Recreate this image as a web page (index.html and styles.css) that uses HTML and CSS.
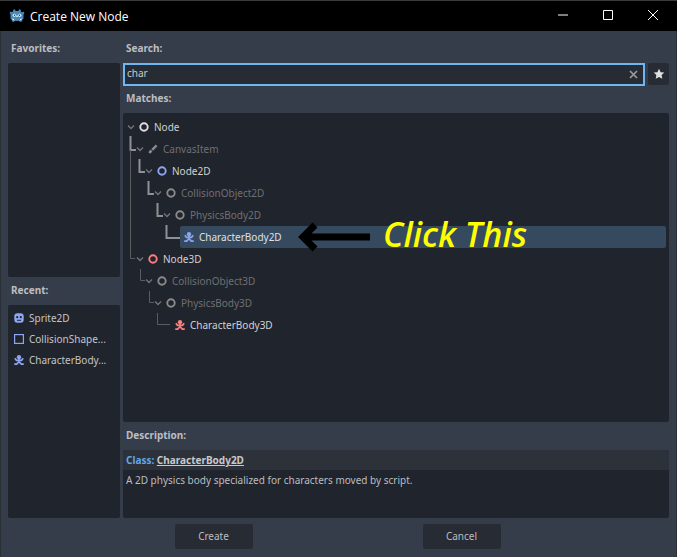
FILE: index.html
```html
<!DOCTYPE html>
<html lang="en">
<head>
<meta charset="utf-8">
<title>Create New Node</title>
<link rel="stylesheet" href="styles.css">
</head>
<body>
<svg class="defs" width="0" height="0" aria-hidden="true">
  <symbol id="chev" viewBox="0 0 8 8"><path d="M1 2.500 4 5.500 7 2.500" fill="none" stroke="currentColor" stroke-width="1.300"/></symbol>
  <symbol id="ring" viewBox="0 0 10 10"><circle cx="5" cy="5" r="3.700" fill="none" stroke="currentColor" stroke-width="1.900"/></symbol>
  <symbol id="body" viewBox="0 0 12 12"><circle cx="6" cy="2.700" r="2.600" fill="currentColor"/><path d="M1 3.800 3 6.400H9L11 3.800M6 4.500V8M.3 11H3.200L6 8l2.800 3h2.900" fill="none" stroke="currentColor" stroke-width="2"/></symbol>
</svg>
<div class="window">
  <header class="titlebar">
    <svg class="logo" viewBox="0 0 16 16"><path fill="#478cbf" d="M6 1.200 6.500 3h3L10 1.200l2 .7-.2 1.600 1.200.9 1.400-.8 1.100 1.500-1 1.200v4.500l-1 .4-.4 2-2.400.8-.3-1.500H5.600l-.3 1.500-2.400-.8-.4-2-1-.4V6.100l-1-1.200L1.600 3.400l1.400.8 1.200-.9L4 1.900z"/><circle cx="5.300" cy="7.200" r="1.500" fill="#fff"/><circle cx="10.700" cy="7.200" r="1.500" fill="#fff"/><circle cx="5.500" cy="7.300" r=".8" fill="#333"/><circle cx="10.500" cy="7.300" r=".8" fill="#333"/><path fill="#fff" d="M7.300 7.500h1.400v1.500H7.300zM3.500 10.600l1.500.4v1H8h3v-1l1.500-.4v1.200l-1.500.4H5l-1.500-.4z"/></svg>
    <span class="title-text">Create New Node</span>
    <div class="caption">
      <svg class="cap" viewBox="0 0 10 10"><path d="M0 5h10" stroke="#fff" stroke-width="1"/></svg>
      <svg class="cap" viewBox="0 0 10 10"><path d="M.5.500h9v9h-9z" fill="none" stroke="#fff"/></svg>
      <svg class="cap" viewBox="0 0 10 10"><path d="M0 0 10 10M10 0 0 10" stroke="#fff" stroke-width="1"/></svg>
    </div>
  </header>

  <main class="content">
    <aside class="side">
      <div class="label">Favorites:</div>
      <div class="panel favorites"></div>
      <div class="label recent-label">Recent:</div>
      <div class="panel recent">
        <div class="recent-row">
          <svg class="ico10 blue" viewBox="0 0 10 10"><rect x=".3" y=".3" width="9.400" height="9.400" rx="3" fill="currentColor"/><circle cx="3.200" cy="4.200" r="1.100" fill="#20242c"/><circle cx="6.800" cy="4.200" r="1.100" fill="#20242c"/><path d="M3 7.300h4" stroke="#20242c" stroke-width="1"/></svg>
          <span>Sprite2D</span>
        </div>
        <div class="recent-row">
          <svg class="ico10 blue" viewBox="0 0 10 10"><rect x=".6" y=".6" width="8.800" height="8.800" fill="none" stroke="currentColor" stroke-width="1.200"/></svg>
          <span>CollisionShape...</span>
        </div>
        <div class="recent-row">
          <svg class="ico10 blue"><use href="#body"/></svg>
          <span>CharacterBody...</span>
        </div>
      </div>
    </aside>

    <section class="main-col">
      <div class="label">Search:</div>
      <div class="search-row">
        <div class="search-input">
          <span class="search-text">char</span>
          <svg class="clear" viewBox="0 0 9 9"><path d="M1 1 8 8M8 1 1 8" stroke="#9a9b9e" stroke-width="1.700"/></svg>
        </div>
        <button class="star-btn" type="button">
          <svg viewBox="0 0 12 12" class="star"><path fill="#e0e0e0" d="M6 .8 7.600 4.200l3.700.4-2.700 2.500.7 3.700L6 9 2.700 10.800l.7-3.700L.7 4.600l3.700-.4z"/></svg>
        </button>
      </div>
      <div class="label matches-label">Matches:</div>
      <div class="panel tree">
        <svg class="guides" width="546" height="309" viewBox="0 0 546 309">
          <path class="strong" d="M7.500 23V37H13M16.500 46V59H22M25.500 68V81H31M34.500 90V103H40M43.500 112V125H57"/>
          <path class="weak" d="M7.500 37V145.500H12M17.500 156V167.500H22M26.500 178V189.500H31M34.500 200V211.500H47"/>
        </svg>
        <div class="row d0 bright"><svg class="chev"><use href="#chev"/></svg><svg class="ring white"><use href="#ring"/></svg><span>Node</span></div>
        <div class="row d1 dim"><svg class="chev"><use href="#chev"/></svg><svg class="ring" viewBox="0 0 10 10"><path d="M.8 9.200 2.800 9.200 4.400 7.400 2.600 5.600.8 7.400zM3.300 4.900 7.800.6 9.400 2.200 5.100 6.700z" fill="#8a8a8a"/></svg><span>CanvasItem</span></div>
        <div class="row d2 bright"><svg class="chev"><use href="#chev"/></svg><svg class="ring blue"><use href="#ring"/></svg><span>Node2D</span></div>
        <div class="row d3 dim"><svg class="chev"><use href="#chev"/></svg><svg class="ring grey"><use href="#ring"/></svg><span>CollisionObject2D</span></div>
        <div class="row d4 dim"><svg class="chev"><use href="#chev"/></svg><svg class="ring grey"><use href="#ring"/></svg><span>PhysicsBody2D</span></div>
        <div class="row d5 selected"><svg class="ring blue"><use href="#body"/></svg><span>CharacterBody2D</span></div>
        <div class="row d1 bright"><svg class="chev"><use href="#chev"/></svg><svg class="ring red"><use href="#ring"/></svg><span>Node3D</span></div>
        <div class="row d2 dim"><svg class="chev"><use href="#chev"/></svg><svg class="ring grey"><use href="#ring"/></svg><span>CollisionObject3D</span></div>
        <div class="row d3 dim"><svg class="chev"><use href="#chev"/></svg><svg class="ring grey"><use href="#ring"/></svg><span>PhysicsBody3D</span></div>
        <div class="row d4b bright"><svg class="ring red"><use href="#body"/></svg><span>CharacterBody3D</span></div>
        <svg class="arrow" viewBox="0 0 72 30"><path d="M72 15H4M17 3 5 15 17 27" fill="none" stroke="#000" stroke-width="7"/></svg>
        <span class="callout">Click This</span>
      </div>
      <div class="label desc-label">Description:</div>
      <div class="panel description">
        <div class="desc-head"><span class="cls">Class:</span> <span class="cls-name">CharacterBody2D</span></div>
        <div class="desc-body">A 2D physics body specialized for characters moved by script.</div>
      </div>
    </section>
  </main>

  <footer class="footer">
    <button class="btn" type="button">Create</button>
    <button class="btn" type="button">Cancel</button>
  </footer>
</div>
</body>
</html>
```

FILE: styles.css
```css
* { box-sizing: border-box; }
html, body { margin: 0; padding: 0; height: 100%; overflow: hidden; }
body { background: #363d4a; font-family: "Noto Sans", sans-serif; font-size: 10px; color: #d0d0d0; }
.defs { position: absolute; }
.window { width: 677px; height: 557px; display: flex; flex-direction: column; border-left: 1px solid #2b2f36; border-right: 1px solid #2b2f36; }

.titlebar { height: 31px; flex: none; background: #000; border-top: 1px solid #3a3a3a; display: flex; align-items: center; padding-left: 9px; color: #fff; margin: 0 -1px; }
.logo { width: 16px; height: 16px; flex: none; }
.title-text { margin-left: 5px; font-size: 12px; font-family: "Open Sans", sans-serif; }
.caption { margin-left: auto; display: flex; align-items: center; gap: 35px; padding-right: 19px; margin-top: -2px; }
.cap { width: 10px; height: 10px; display: block; }

.content { flex: 1; min-height: 0; display: grid; grid-template-columns: 112px 546px; column-gap: 3px; padding: 9px 7px 0 7px; }
.side, .main-col { display: flex; flex-direction: column; min-height: 0; }
.label { height: 16px; line-height: 16px; margin-bottom: 7px; padding-left: 3px; font-weight: 700; color: #bcbec2; flex: none; }
.panel { background: #20242c; border-radius: 2px; }
.favorites { height: 214px; flex: none; }
.recent-label { margin-top: 5px; }
.recent { height: 213px; flex: none; padding-top: 2px; }
.recent-row { height: 21px; display: flex; align-items: center; padding-left: 6px; gap: 5px; white-space: nowrap; color: #c4c5c8; }
.ico10 { width: 10px; height: 10px; flex: none; }
.blue { color: #8da5f3; }
.red { color: #fc7f7f; }
.white { color: #e0e0e0; }
.grey { color: #8a8a8a; }

.search-row { display: flex; gap: 3px; height: 23px; flex: none; }
.search-input { width: 522px; height: 23px; border: 2px solid #70b6f0; background: #262b34; display: flex; align-items: center; padding: 0 5px 0 2px; }
.search-text { color: #c8c9cc; margin-top: -3px; }
.clear { width: 9px; height: 9px; margin-left: auto; }
.star-btn { width: 21px; height: 22px; background: #262b34; border: 0; border-radius: 2px; padding: 0; display: flex; align-items: center; justify-content: center; }
.star { width: 12px; height: 12px; }
.matches-label { margin-top: 4px; }

.tree { position: relative; height: 309px; flex: none; padding-top: 3px; overflow: hidden; }
.guides { position: absolute; left: 0; top: 0; fill: none; }
.strong { stroke: #8f9093; stroke-width: 2; }
.weak { stroke: #5a5c60; stroke-width: 1; }
.row { position: relative; height: 22px; display: flex; align-items: center; white-space: nowrap; }
.chev { width: 8px; height: 8px; color: #75767a; flex: none; margin-right: 4px; }
.ring { width: 10px; height: 10px; flex: none; margin-right: 5px; }
.bright { color: #d0d1d3; }
.dim { color: #6f7073; }
.d0 { padding-left: 4px; }
.d1 { padding-left: 13px; }
.d2 { padding-left: 22px; }
.d3 { padding-left: 31px; }
.d4 { padding-left: 40px; }
.d4b { padding-left: 52px; }
.d5 { margin-left: 57px; width: 486px; padding-left: 4px; border-radius: 2px; }
.selected { background: #35495f; color: #e0e0e0; }
.arrow { position: absolute; left: 174px; top: 109px; width: 74px; height: 30px; }
.callout { position: absolute; left: 260px; top: 98px; font-family: "Open Sans", sans-serif; font-style: italic; font-weight: 600; font-size: 34px; line-height: 46px; color: #ffff00; white-space: nowrap; }

.desc-label { margin-top: 5px; }
.description { height: 68px; flex: none; overflow: hidden; }
.desc-head { height: 20px; line-height: 20px; background: #2d3139; padding-left: 3px; font-weight: 700; }
.cls { color: #62a8e6; }
.cls-name { color: #c8c9cc; text-decoration: underline; }
.desc-body { padding: 3px 3px; line-height: 15px; color: #bcbdc0; }

.footer { flex: none; height: 33px; display: flex; justify-content: center; gap: 170px; margin-left: -2px; }
.btn { width: 78px; height: 25px; background: #262b34; border: 0; border-radius: 2px; font: inherit; color: #bcbdc0; padding: 0 0 2px; }
```
